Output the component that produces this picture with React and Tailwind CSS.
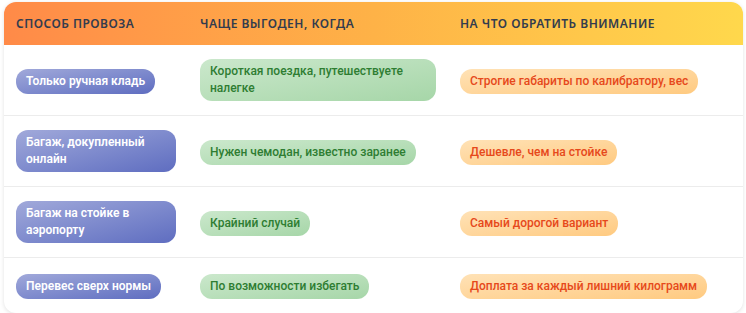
import React from 'react';

const ROWS = [
  {
    method: 'Только ручная кладь',
    when: 'Короткая поездка, путешествуете налегке',
    note: 'Строгие габариты по калибратору, вес',
  },
  {
    method: 'Багаж, докупленный онлайн',
    when: 'Нужен чемодан, известно заранее',
    note: 'Дешевле, чем на стойке',
  },
  {
    method: 'Багаж на стойке в аэропорту',
    when: 'Крайний случай',
    note: 'Самый дорогой вариант',
  },
  {
    method: 'Перевес сверх нормы',
    when: 'По возможности избегать',
    note: 'Доплата за каждый лишний килограмм',
  },
];

const HEADERS = ['Способ провоза', 'Чаще выгоден, когда', 'На что обратить внимание'];

const pill = 'inline-block rounded-xl px-2.5 py-1 text-[12px] leading-[17px] font-["Roboto",sans-serif]';

export default function App() {
  return (
    <div
      className="bg-white pl-[4px] pr-[3px] pt-[2px] pb-1"
      style={{ fontFamily: '"Noto Sans", "Open Sans", sans-serif' }}
    >
      <div className="overflow-hidden rounded-xl bg-white shadow-[0_1px_4px_rgba(0,0,0,0.12)]">
        {/* Header */}
        <div className="grid grid-cols-[184px_260px_1fr] bg-gradient-to-r from-[#ff8a48] via-[#feb247] to-[#ffd84c]">
          {HEADERS.map(h => (
            <div
              key={h}
              className="px-3 py-[14px] text-[12px] font-semibold uppercase leading-[15px] tracking-[0.5px] text-[#333c4e]"
            >
              {h}
            </div>
          ))}
        </div>

        {/* Body */}
        {ROWS.map((r, i) => (
          <div
            key={r.method}
            className={`grid grid-cols-[184px_260px_1fr] items-center ${
              i < ROWS.length - 1 ? 'border-b border-[#ececec]' : ''
            }`}
          >
            <div className="px-3 py-[14px]">
              <span className={`${pill} bg-gradient-to-br from-[#a1a9da] to-[#5f6dc0] font-semibold text-white`}>
                {r.method}
              </span>
            </div>
            <div className="px-3 py-[14px]">
              <span className={`${pill} bg-gradient-to-br from-[#cbe8cc] to-[#a6d6a8] font-medium text-[#2e7d32]`}>
                {r.when}
              </span>
            </div>
            <div className="px-3 py-[14px]">
              <span className={`${pill} bg-gradient-to-br from-[#ffe2b6] to-[#ffca80] font-medium text-[#e6491b]`}>
                {r.note}
              </span>
            </div>
          </div>
        ))}
      </div>
    </div>
  );
}
